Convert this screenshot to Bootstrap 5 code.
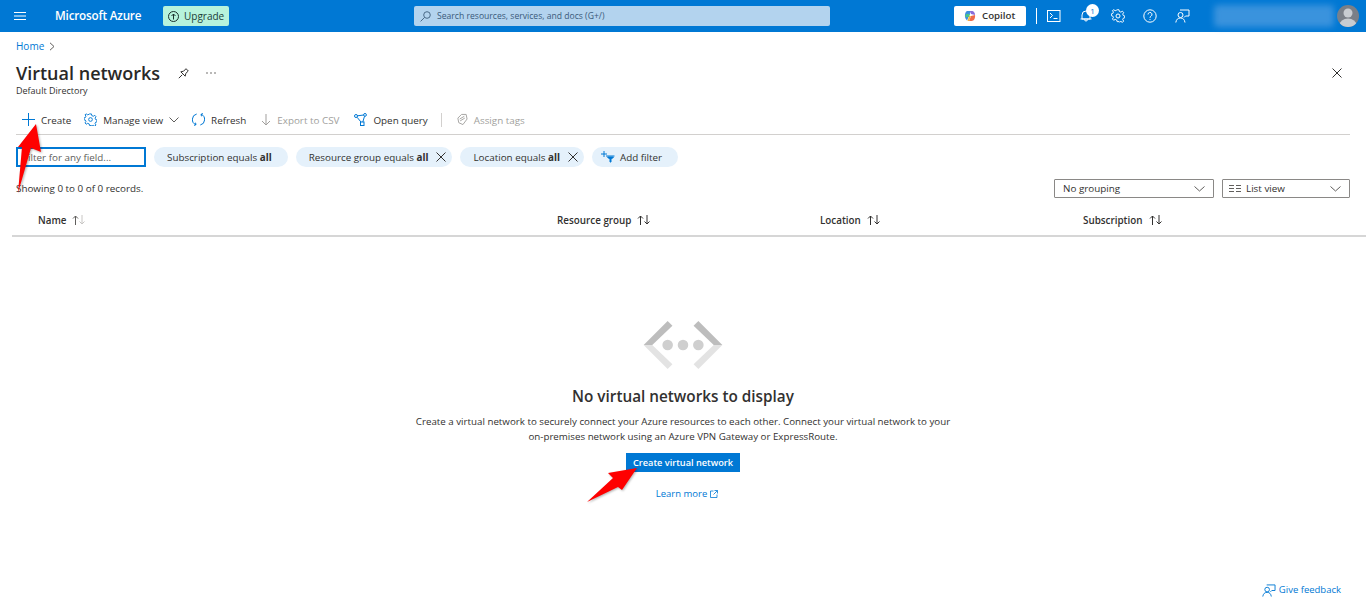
<!DOCTYPE html>
<html lang="en">
<head>
<meta charset="utf-8">
<title>Virtual networks</title>
<link href="https://cdn.jsdelivr.net/npm/bootstrap@5.3.0/dist/css/bootstrap.min.css" rel="stylesheet">
<style>
html,body{height:615px;overflow:hidden}
body{font-family:"Open Sans","Noto Sans",sans-serif;font-size:9.85px;color:#323130;background:#fff;position:relative}
svg{display:block;flex:none}
.topbar{height:32px;background:#0078d4;color:#fff}
.burger{margin-left:14px}
.brand{font-size:11.7px;font-weight:600;margin-left:29px;width:109px;white-space:nowrap;letter-spacing:-.2px}
.upgrade{width:66px;height:20px;background:#b7f3dc;border-radius:2px;color:#1b3d38;font-size:10px;margin-left:-1px;padding-left:5px;gap:5px}
.searchbox{width:416px;height:20px;background:#b3d3ee;border-radius:2px;margin-left:185px;padding-left:6px;gap:6px;color:#3a5a7a;font-size:8.6px}
.copilot{width:72px;height:20px;background:#fff;border-radius:2px;color:#323130;font-size:9.7px;font-weight:600;gap:6px;margin-left:124px;padding-left:10px}
.vsep{width:1px;height:16px;background:#fff;margin:0 10px}
.topicons{gap:18px}
.noticebadge{position:absolute;top:-5px;left:7px;width:13px;height:13px;border-radius:50%;background:#fff;color:#0078d4;font-size:8px;line-height:13px;text-align:center}
.blurname{width:120px;height:22px;margin-left:24px;background:#3a93dd;filter:blur(3px);border-radius:4px}
.avatar{width:22px;height:22px;border-radius:50%;background:#7a7f87;margin-left:3px;overflow:hidden}
.crumb{padding:2px 0 0 16px;height:26px;font-size:10px;color:#0078d4;gap:5px}
.titlerow{padding:2px 24px 0 16px;height:27px}
.pagetitle{font-size:18px;font-weight:600;line-height:24px;margin:0;color:#292827;width:154px;white-space:nowrap}
.subdir{padding-left:16px;font-size:9px;line-height:12px;height:12px;color:#323130}
.toolbar{margin:9px 16px 0;height:29px;padding:0 0 0 6px;border-bottom:1px solid #d2d0ce}
.tool{white-space:nowrap;gap:6px;margin-right:13px;color:#323130}
.tool.off{color:#a19f9d}
.tool-wide{margin-right:15px}
.toolsep{width:1px;height:14px;background:#d2d0ce;margin-right:14px}
.filters{margin:12px 16px 0;gap:8px;height:20px}
.filterinput{width:130px;height:20px;border:2px solid #0078d4;padding-left:5px;color:#605e5c;line-height:16px}
.pill{height:20px;border-radius:10px;background:#e5f1fb;padding:0 13px;white-space:nowrap;gap:8px}
.pill-first{padding-right:16px}
.pill-close{padding-right:6px}
.pill-add{padding:0 16px 0 9px;gap:5px}
.pill b{font-weight:700}
.inforow{margin:12px 16px 0;height:19px}
.drop{height:19px;border:1px solid #8a8886;border-radius:1px;padding:0 8px;color:#323130;gap:5px}
.drop-group{width:160px}
.drop-view{width:128px;padding-left:6px}
.gridhead{margin:12px 0 0 12px;height:27px;border-bottom:2px solid #d6d6d6;font-weight:600;color:#323130;padding-bottom:4px}
.colh{gap:6px;white-space:nowrap;width:263px}
.colh-name{width:545px;padding-left:26px}
.emptystate{padding-top:84px;text-align:center}
.emptytitle{font-size:15.3px;font-weight:600;line-height:20px;margin:17px 0 0;color:#323130}
.emptytext{font-size:9.75px;line-height:15px;width:545px;margin:8px auto 0;color:#323130}
.ctabtn{background:#0078d4;color:#fff;border:0;border-radius:0;font-size:9.2px;font-weight:600;height:19px;width:114px;padding:0;margin-top:9px;line-height:19px}
.ctabtn:hover{background:#0078d4;color:#fff}
.learn{font-size:9.5px;color:#0078d4;margin:15px 0 0 8px;gap:3px;text-decoration:none}
.feedback{position:absolute;right:25px;top:583px;color:#0078d4;font-size:9.5px;gap:3px;text-decoration:none}
.arrow{position:absolute;pointer-events:none;filter:drop-shadow(1px 1px 1px rgba(0,0,0,.3))}
.arrow-create{left:14px;top:122px}
.arrow-cta{left:584px;top:465px}
</style>
</head>
<body>
<header class="topbar d-flex align-items-center">
  <svg class="burger" width="12" height="10" viewBox="0 0 12 10" stroke="#fff" stroke-width="1"><path d="M0 1.500h12M0 5h12M0 8.500h12"/></svg>
  <div class="brand">Microsoft Azure</div>
  <div class="upgrade d-flex align-items-center">
    <svg width="11" height="11" viewBox="0 0 11 11" fill="none" stroke="#1b2f2c"><circle cx="5.500" cy="5.500" r="5"/><path d="M5.500 8.500V3M3.500 5l2-2 2 2"/></svg>Upgrade
  </div>
  <div class="searchbox d-flex align-items-center">
    <svg width="11" height="11" viewBox="0 0 11 11" fill="none" stroke="#4a6a88"><circle cx="7" cy="4" r="3.300"/><path d="M4.600 6.400L.6 10.400"/></svg>Search resources, services, and docs (G+/)
  </div>
  <div class="copilot d-flex align-items-center">
    <svg width="12" height="12" viewBox="0 0 12 12"><path d="M3 1h4L5 6 3 10.500C1.500 9 .5 7 1 4.500 1.300 2.500 2 1.500 3 1z" fill="#3d8fe0"/><path d="M6 1h2.500c1.500.5 2.500 2 2.500 4L7 4z" fill="#8a6cd8"/><path d="M11 5c.5 3-1 6-3.500 6H5l2-5z" fill="#f06a4a"/><path d="M7 6l-2 5H3.500L5 6z" fill="#f5b63a"/><path d="M2 4h4L5 7H1z" fill="#4cc38a"/></svg>Copilot
  </div>
  <span class="vsep"></span>
  <div class="topicons d-flex align-items-center">
    <svg width="14" height="12" viewBox="0 0 14 12" fill="none" stroke="#fff"><rect x=".5" y=".5" width="12.500" height="11"/><path d="M3 3l2.500 2.500L3 8M6.500 8.500h4"/></svg>
    <span class="position-relative d-block">
      <svg width="14" height="14" viewBox="0 0 14 14" fill="none" stroke="#fff"><path d="M3 10V6a4 4 0 0 1 8 0v4zM1.500 10h11M5.500 10.500a1.500 1.500 0 0 0 3 0"/></svg>
      <span class="noticebadge">1</span>
    </span>
    <svg width="14" height="14" viewBox="0 0 14 14" fill="none" stroke="#fff"><circle cx="7" cy="7" r="2"/><path d="M6 1h2l.4 1.800 1.600.7 1.600-1 1.300 1.500-1 1.500.6 1.500 1.500.5v2l-1.500.4-.6 1.500 1 1.500-1.300 1.400-1.600-1-1.600.7L8 13.500H6l-.4-1.700-1.600-.7-1.600 1L1.100 10.700l1-1.500L1.500 7.700 0 7.300v-2l1.500-.4.600-1.500-1-1.500L2.400 1l1.600 1 1.600-.7z" transform="translate(.4 -.2) scale(.95)"/></svg>
    <svg width="14" height="14" viewBox="0 0 14 14" fill="none" stroke="#fff"><circle cx="7" cy="7" r="6.200"/><path d="M5 5.500a2 2 0 1 1 3 1.700c-.7.4-1 .8-1 1.600"/><circle cx="7" cy="10.500" r=".6" fill="#fff" stroke="none"/></svg>
    <svg width="15" height="14" viewBox="0 0 15 14" fill="none" stroke="#fff"><circle cx="5.500" cy="6" r="2.500"/><path d="M.8 13.500c.5-3 2-4.500 4.700-4.500s4 1.500 4.500 4.500M5 1h9v6h-3.500l-1.500 1.500"/></svg>
  </div>
  <div class="blurname"></div>
  <div class="avatar">
    <svg width="22" height="22" viewBox="0 0 22 22" fill="#c8ccd1"><circle cx="11" cy="8" r="4.500"/><ellipse cx="11" cy="20" rx="8.500" ry="6.500"/></svg>
  </div>
</header>

<nav class="crumb d-flex align-items-center">
  <span>Home</span>
  <svg width="6" height="9" viewBox="0 0 6 9" fill="none" stroke="#605e5c"><path d="M1 .8l4 3.700-4 3.700"/></svg>
</nav>
<div class="titlerow d-flex align-items-center">
  <h1 class="pagetitle">Virtual networks</h1>
  <svg class="ms-2" width="12" height="12" viewBox="0 0 12 12" fill="none" stroke="#323130"><path d="M.8 11.200l3.400-3.400M2.800 4.800l4.400 4.400.6-2.800L10.300 4 8 1.700 5.600 4.200z"/></svg>
  <svg class="ms-3" width="10" height="2" viewBox="0 0 10 2" fill="#605e5c"><circle cx="1" cy="1" r=".8"/><circle cx="5" cy="1" r=".8"/><circle cx="9" cy="1" r=".8"/></svg>
  <svg class="ms-auto" width="10" height="10" viewBox="0 0 10 10" stroke="#323130" fill="none"><path d="M.5.500l9 9M9.500.500l-9 9"/></svg>
</div>
<div class="subdir">Default Directory</div>

<div class="toolbar d-flex align-items-center">
  <div class="tool d-flex align-items-center">
    <svg width="13" height="13" viewBox="0 0 13 13" stroke="#0078d4"><path d="M6.500 0v13M0 6.500h13"/></svg>Create
  </div>
  <div class="tool d-flex align-items-center">
    <svg width="13" height="13" viewBox="0 0 14 14" fill="none" stroke="#0078d4"><circle cx="7" cy="7" r="2"/><path d="M6 1h2l.4 1.800 1.600.7 1.600-1 1.300 1.500-1 1.500.6 1.500 1.500.5v2l-1.500.4-.6 1.500 1 1.500-1.300 1.400-1.600-1-1.600.7L8 13.500H6l-.4-1.700-1.600-.7-1.600 1L1.100 10.700l1-1.500L1.500 7.700 0 7.300v-2l1.500-.4.600-1.500-1-1.500L2.400 1l1.600 1 1.600-.7z"/></svg>
    <span>Manage view</span>
    <svg width="10" height="6" viewBox="0 0 10 6" fill="none" stroke="#605e5c"><path d="M.5.500L5 5 9.500.500"/></svg>
  </div>
  <div class="tool tool-wide d-flex align-items-center">
    <svg width="13" height="13" viewBox="0 0 13 13" fill="none" stroke="#0078d4"><path d="M4.700 1A5.600 5.600 0 0 0 4 11.700M8.300 12A5.600 5.600 0 0 0 9 1.300M9 1.300L11 .6M9 1.300L9.500 3.300M4 11.700L2 12.400M4 11.700L3.500 9.700"/></svg>Refresh
  </div>
  <div class="tool off tool-wide d-flex align-items-center">
    <svg width="10" height="12" viewBox="0 0 10 12" fill="none" stroke="#a19f9d"><path d="M5 0v11M1 7l4 4 4-4"/></svg>Export to CSV
  </div>
  <div class="tool d-flex align-items-center">
    <svg width="13" height="13" viewBox="0 0 13 13" fill="none" stroke="#0078d4"><circle cx="2" cy="3" r="1.500"/><circle cx="11" cy="1.900" r="1.400"/><rect x="6.500" y="9" width="3.500" height="3.500"/><path d="M3.500 2.800L9.600 2M3 4.200L7 9M10.500 3.300L8.800 9"/></svg>Open query
  </div>
  <span class="toolsep"></span>
  <div class="tool off d-flex align-items-center">
    <svg width="12" height="13" viewBox="0 0 13 13" fill="none" stroke="#a19f9d"><path d="M2 5l4-4h5l1 5-4.500 6L3 10z"/><path d="M4 6l5-3M4.500 8l5-3"/></svg>Assign tags
  </div>
</div>

<div class="filters d-flex align-items-center">
  <div class="filterinput">Filter for any field...</div>
  <div class="pill pill-first d-flex align-items-center"><span>Subscription equals <b>all</b></span></div>
  <div class="pill pill-close d-flex align-items-center"><span>Resource group equals <b>all</b></span>
    <svg width="10" height="10" viewBox="0 0 10 10" fill="none" stroke="#323130"><path d="M.5.500l9 9M9.500.500l-9 9"/></svg></div>
  <div class="pill pill-close d-flex align-items-center"><span>Location equals <b>all</b></span>
    <svg width="10" height="10" viewBox="0 0 10 10" fill="none" stroke="#323130"><path d="M.5.500l9 9M9.500.500l-9 9"/></svg></div>
  <div class="pill pill-add d-flex align-items-center">
    <svg width="14" height="12" viewBox="0 0 14 12" fill="none" stroke="#0078d4"><path d="M3 0v6M0 3h6"/><path d="M5 5h8.500"/><path d="M6.500 6h6l-2.500 2.500V11H9V8.500z" fill="#0078d4"/></svg>Add filter</div>
</div>

<div class="inforow d-flex align-items-center">
  <span>Showing 0 to 0 of 0 records.</span>
  <div class="drop drop-group d-flex align-items-center justify-content-between ms-auto"><span>No grouping</span>
    <svg width="11" height="6" viewBox="0 0 11 6" fill="none" stroke="#605e5c"><path d="M.5.500L5.500 5l5-4.500"/></svg></div>
  <div class="drop drop-view d-flex align-items-center ms-2">
    <svg width="12" height="7" viewBox="0 0 12 7" stroke="#605e5c"><path d="M0 .5h5M7 .5h5M0 3.500h5M7 3.500h5M0 6.500h5M7 6.500h5"/></svg><span>List view</span>
    <svg class="ms-auto" width="11" height="6" viewBox="0 0 11 6" fill="none" stroke="#605e5c"><path d="M.5.500L5.500 5l5-4.500"/></svg></div>
</div>

<div class="gridhead d-flex align-items-center">
  <div class="colh colh-name d-flex align-items-center"><span>Name</span>
    <svg width="14" height="10" viewBox="0 0 14 10" fill="none"><path d="M3.500 10V1M1 3.500L3.500 1 6 3.500" stroke="#605e5c"/><path d="M10 0v9M7.500 6.500L10 9l2.500-2.500" stroke="#c8c6c4"/></svg></div>
  <div class="colh d-flex align-items-center"><span>Resource group</span>
    <svg width="14" height="10" viewBox="0 0 14 10" fill="none" stroke="#323130"><path d="M3.500 10V1M1 3.500L3.500 1 6 3.500M10 0v9M7.500 6.500L10 9l2.500-2.500"/></svg></div>
  <div class="colh d-flex align-items-center"><span>Location</span>
    <svg width="14" height="10" viewBox="0 0 14 10" fill="none" stroke="#323130"><path d="M3.500 10V1M1 3.500L3.500 1 6 3.500M10 0v9M7.500 6.500L10 9l2.500-2.500"/></svg></div>
  <div class="colh d-flex align-items-center"><span>Subscription</span>
    <svg width="14" height="10" viewBox="0 0 14 10" fill="none" stroke="#323130"><path d="M3.500 10V1M1 3.500L3.500 1 6 3.500M10 0v9M7.500 6.500L10 9l2.500-2.500"/></svg></div>
</div>

<main class="emptystate d-flex flex-column align-items-center">
  <svg width="80" height="48" viewBox="0 0 82 50">
    <path d="M25 0l5 5L9 25H0z" fill="#bdbdbd"/>
    <path d="M0 25h9l21 20-5 5z" fill="#e3e3e3"/>
    <path d="M57 0l-5 5 21 20h9z" fill="#bdbdbd"/>
    <path d="M82 25h-9L52 45l5 5z" fill="#e3e3e3"/>
    <circle cx="25" cy="25" r="5.500" fill="#cfcfcf"/><circle cx="41" cy="25" r="5.500" fill="#cfcfcf"/><circle cx="57" cy="25" r="5.500" fill="#cfcfcf"/>
  </svg>
  <h2 class="emptytitle">No virtual networks to display</h2>
  <p class="emptytext">Create a virtual network to securely connect your Azure resources to each other. Connect your virtual network to your on-premises network using an Azure VPN Gateway or ExpressRoute.</p>
  <button type="button" class="btn ctabtn">Create virtual network</button>
  <a href="#" class="learn d-flex align-items-center">Learn more
    <svg width="8" height="8" viewBox="0 0 8 8" fill="none" stroke="#0078d4" stroke-width=".8"><path d="M3.500 1H.5v6.500H7V4.500M4.500.5h3v3M7.500.5L3.500 4.500"/></svg></a>
</main>

<a href="#" class="feedback d-flex align-items-center">
  <svg width="14" height="13" viewBox="0 0 15 14" fill="none" stroke="#0078d4"><circle cx="5.500" cy="6" r="2.500"/><path d="M.8 13.500c.5-3 2-4.500 4.700-4.500s4 1.500 4.500 4.500M5 1h9v6h-3.500l-1.500 1.500"/></svg>Give feedback</a>

<svg class="arrow arrow-create" width="32" height="76" viewBox="0 0 32 76"><path d="M22 2L27 30 17 26 4 71 8 25 4 25z" fill="#fe0000"/></svg>
<svg class="arrow arrow-cta" width="58" height="42" viewBox="0 0 58 42"><path d="M53 3L24 8 29 13 3 37 34 22 38 25z" fill="#fe0000"/></svg>
</body>
</html>
